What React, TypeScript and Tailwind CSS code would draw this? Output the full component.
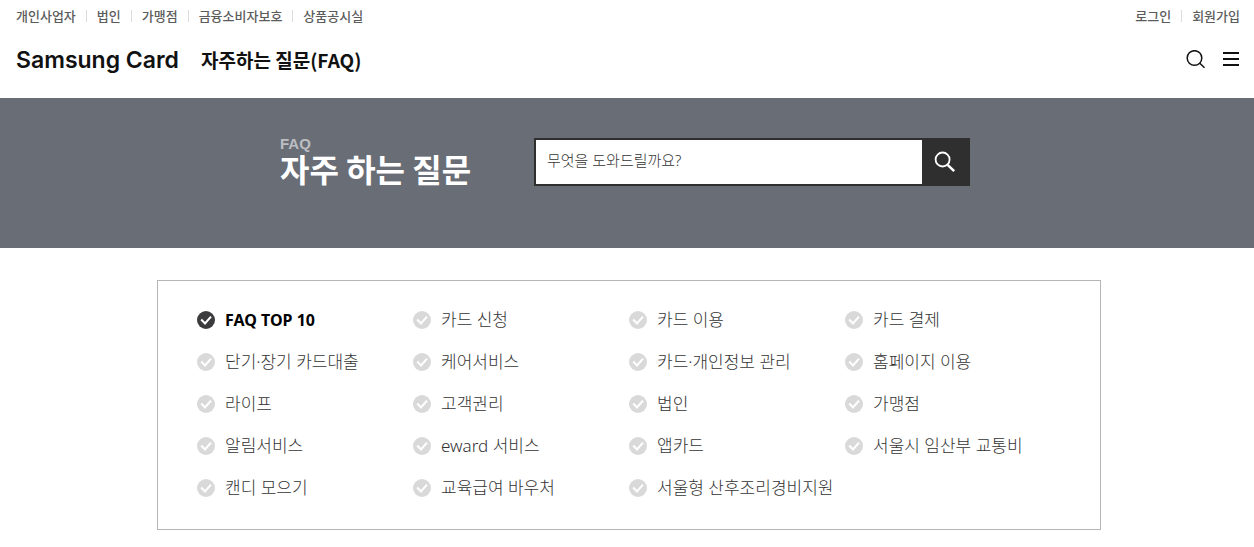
const utilityLinks = ["개인사업자", "법인", "가맹점", "금융소비자보호", "상품공시실"];
const accountLinks = ["로그인", "회원가입"];

const categories = [
  "FAQ TOP 10",
  "카드 신청",
  "카드 이용",
  "카드 결제",
  "단기·장기 카드대출",
  "케어서비스",
  "카드·개인정보 관리",
  "홈페이지 이용",
  "라이프",
  "고객권리",
  "법인",
  "가맹점",
  "알림서비스",
  "eward 서비스",
  "앱카드",
  "서울시 임산부 교통비",
  "캔디 모으기",
  "교육급여 바우처",
  "서울형 산후조리경비지원",
];

function LinkRow({ items, label }: { items: string[]; label: string }) {
  return (
    <nav aria-label={label}>
      <ul className="flex items-center">
        {items.map((item, i) => (
          <li key={item} className="flex items-center">
            {i > 0 && <span className="mx-2.5 h-3 w-px bg-[#dcdde3]" />}
            <a href="#" className="text-[13px] leading-5 font-medium whitespace-nowrap text-[#5c5c5c]">
              {item}
            </a>
          </li>
        ))}
      </ul>
    </nav>
  );
}

function CheckMark({ active }: { active: boolean }) {
  return (
    <svg viewBox="0 0 18 18" className="size-[18px] shrink-0" aria-hidden="true">
      <circle cx="9" cy="9" r="9" fill={active ? "#3b3b3d" : "#d9d9d9"} />
      <path d="M4.2 8.6 8 12.4 14 5.6" fill="none" stroke="#fff" strokeWidth="2.1" />
    </svg>
  );
}

export default function App() {
  return (
    <div className="min-h-screen bg-white font-['Noto_Sans_CJK_KR',sans-serif]">
      <header className="pr-3.5 pb-5 pl-4">
        <div className="flex justify-between pt-1.5">
          <LinkRow items={utilityLinks} label="서비스" />
          <LinkRow items={accountLinks} label="회원" />
        </div>
        <div className="mt-4 flex h-9 items-center">
          <a href="#" className="font-[Inter,sans-serif] text-[23px] font-semibold whitespace-nowrap text-[#111]">
            Samsung Card
          </a>
          <h1 className="ml-[22px] text-[19px] font-bold whitespace-nowrap text-[#111]">자주하는 질문(FAQ)</h1>
          <div className="ml-auto flex items-center gap-4">
            <button type="button" aria-label="검색">
              <svg viewBox="0 0 20 20" className="size-5" fill="none" stroke="#111" strokeWidth="1.5">
                <circle cx="8.5" cy="8" r="7.3" />
                <path d="M13.8 13.2 18.5 17.8" />
              </svg>
            </button>
            <button type="button" aria-label="메뉴">
              <svg viewBox="0 0 18 18" className="size-[18px]" stroke="#111" strokeWidth="2">
                <path d="M1 2H17M1 8H17M1 14H17" />
              </svg>
            </button>
          </div>
        </div>
      </header>

      <section className="bg-[#696d76] pt-10 pr-1 pb-[62px]">
        <div className="mx-auto flex max-w-[690px] justify-between">
          <div>
            <p className="font-['Liberation_Sans',sans-serif] text-[15px] leading-3 font-bold text-[#bcbec2]">FAQ</p>
            <h2 className="text-[32px] leading-9 font-bold whitespace-nowrap text-white">자주 하는 질문</h2>
          </div>
          <form className="flex h-12 w-[436px] border-2 border-[#2f2f2f] bg-white" onSubmit={(e) => e.preventDefault()}>
            <input
              type="text"
              aria-label="질문 검색"
              placeholder="무엇을 도와드릴까요?"
              className="min-w-0 flex-1 px-[11px] pb-1 font-['Noto_Sans','Noto_Sans_CJK_KR',sans-serif] text-[15px] text-[#555] outline-none placeholder:font-light placeholder:text-[#333]"
            />
            <button type="submit" aria-label="검색" className="flex w-[46px] items-center justify-center bg-[#2f2f2f]">
              <svg viewBox="0 0 22 22" className="size-[22px]" fill="none" stroke="#fff">
                <circle cx="8.6" cy="8.5" r="7" strokeWidth="1.8" />
                <path d="M13.6 13.8 20.2 20.2" strokeWidth="2.5" />
              </svg>
            </button>
          </form>
        </div>
      </section>

      <main className="py-8 pl-1 font-['Noto_Sans','Noto_Sans_CJK_KR',sans-serif]">
        <ul className="mx-auto grid max-w-[944px] grid-cols-4 border border-[#b5b5b5] pt-[18px] pr-[39px] pb-5 pl-[39px]">
          {categories.map((name, i) => (
            <li key={name} className="h-[42px]">
              <a
                href="#"
                aria-current={i === 0 ? "true" : undefined}
                className={
                  i === 0
                    ? "flex h-full items-center gap-2.5 text-base font-bold whitespace-nowrap text-black"
                    : "flex h-full items-center gap-2.5 text-[17px] font-light whitespace-nowrap text-[#333]"
                }
              >
                <CheckMark active={i === 0} />
                {name}
              </a>
            </li>
          ))}
        </ul>
      </main>
    </div>
  );
}
